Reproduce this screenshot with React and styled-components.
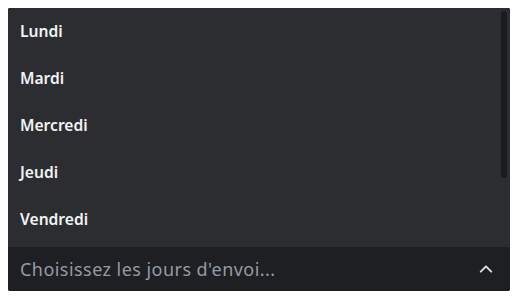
import React from 'react';
import styled, { createGlobalStyle } from 'styled-components';

const GlobalStyle = createGlobalStyle`
  body {
    margin: 8px;
    background: #ffffff;
    font-family: "Noto Sans", "Open Sans", sans-serif;
  }
`;

const Select = styled.div`
  width: 502px;
  height: 283px;
  display: flex;
  flex-direction: column;
  border-radius: 4px;
  overflow: hidden;
  background: #2b2d31;
  box-shadow: 0 0 0 1px #1e1f22;
`;

const MenuWrap = styled.div`
  position: relative;
  flex: 1;
  min-height: 0;
`;

const Menu = styled.ul`
  list-style: none;
  margin: 0;
  padding: 0;
  height: 100%;
  overflow-y: auto;
  scrollbar-width: none;

  &::-webkit-scrollbar {
    display: none;
  }
`;

// scroll thumb drawn over the list (native scrollbars are hidden in the capture)
const Thumb = styled.div`
  position: absolute;
  top: 3px;
  right: 3px;
  width: 6px;
  height: 167px;
  border-radius: 3px;
  background: #1a1b1e;
`;

const Option = styled.li`
  height: 47px;
  box-sizing: border-box;
  padding: 0 12px 2px;
  display: flex;
  align-items: center;
  color: #f2f3f5;
  font-size: 15.6px;
  font-weight: 600;
  line-height: 20px;
  cursor: pointer;
`;

const Control = styled.div`
  height: 44px;
  flex-shrink: 0;
  display: flex;
  align-items: center;
  justify-content: space-between;
  padding: 0 15px 0 12px;
  background: #1e1f22;
`;

const Placeholder = styled.span`
  color: #949ba4;
  font-size: 18px;
  line-height: 24px;
  letter-spacing: 0.45px;
  font-weight: 400;
  white-space: nowrap;
`;

const Chevron = () => (
  <svg width="18" height="18" viewBox="0 0 24 24" fill="none">
    <path d="M5 15.5l7-7 7 7" stroke="#dbdee1" strokeWidth="2.6" strokeLinecap="round" strokeLinejoin="round" />
  </svg>
);

const days = ['Lundi', 'Mardi', 'Mercredi', 'Jeudi', 'Vendredi', 'Samedi', 'Dimanche'];

const App = () => {
  return (
    <>
      <GlobalStyle />
      <Select>
        <MenuWrap>
          <Menu>
            {days.map((d) => (
              <Option key={d}>{d}</Option>
            ))}
          </Menu>
          <Thumb />
        </MenuWrap>
        <Control>
          <Placeholder>Choisissez les jours d'envoi...</Placeholder>
          <Chevron />
        </Control>
      </Select>
    </>
  );
};

export default App;
